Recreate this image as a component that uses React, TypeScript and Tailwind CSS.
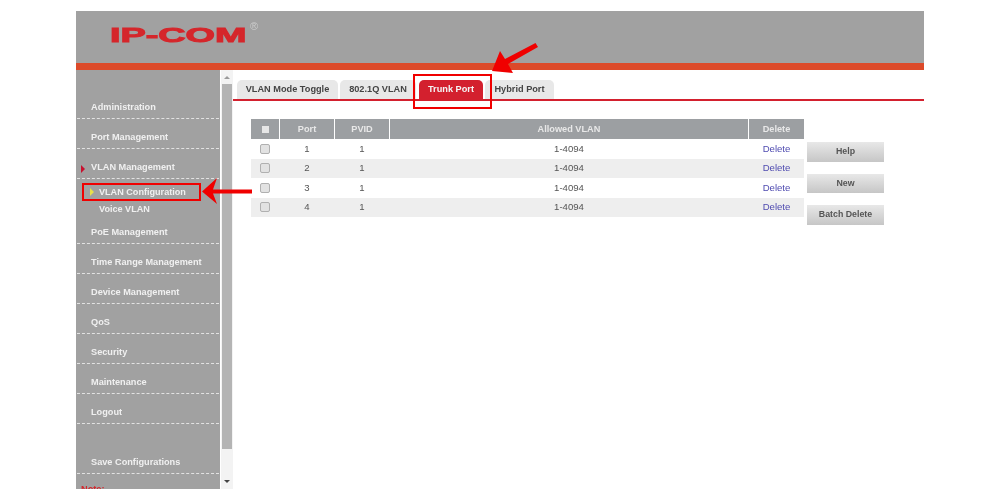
const font = "font-['Liberation_Sans',Arial,sans-serif]";

const menu = [
  { label: 'Administration' },
  { label: 'Port Management' },
  { label: 'VLAN Management', active: true },
];
const menu2 = [
  'PoE Management',
  'Time Range Management',
  'Device Management',
  'QoS',
  'Security',
  'Maintenance',
  'Logout',
];
const rows = [1, 2, 3, 4];

const MenuItem = ({ label, active }: { label: string; active?: boolean }) => (
  <div className="relative mx-[1px] box-border flex h-[30px] items-end border-b border-dashed border-[#e2e2e2] pb-[4px] pl-[14px] text-[9.2px] leading-[13px] font-bold text-[#f0f0f0]">
    {active && (
      <span className="absolute left-[4px] bottom-[5px] h-0 w-0 border-y-[4px] border-l-[4px] border-y-transparent border-l-[#c8102e]" />
    )}
    {label}
  </div>
);

const Tab = ({ label, w, active }: { label: string; w: string; active?: boolean }) => (
  <div
    className={`${w} flex h-[19px] items-center justify-center rounded-t-[5px] pt-[1px] text-[9.2px] font-bold ${
      active ? 'bg-[#d3202e] text-[#f4f4f4]' : 'bg-[#e8e8e8] text-[#444444]'
    }`}
  >
    {label}
  </div>
);

const Btn = ({ label }: { label: string }) => (
  <div className="flex h-[19.5px] w-[77px] items-center justify-center bg-gradient-to-b from-[#e8e8e8] to-[#c6c6c6] text-[8.8px] font-bold text-[#555555]">
    {label}
  </div>
);

const App = () => {
  return (
    <div className={`relative h-[500px] w-[1000px] overflow-hidden bg-white ${font}`}>
      <div className="ml-[76px] pt-[11px] blur-[0.4px] will-change-transform">
        <div className="flex h-[478px] w-[848px] flex-col overflow-hidden">
          <div className="flex h-[52px] items-start bg-[#a1a1a1] pl-[34px] pt-[11px]">
            <span className="w-[78px] origin-left scale-x-[1.8] whitespace-nowrap text-[21px] leading-[26px] font-bold text-[#d5262b] [-webkit-text-stroke:1px_#d5262b]">
              IP-COM
            </span>
            <span className="ml-[62px] -mt-[3px] text-[11px] leading-[14px] text-[#cccccc]">®</span>
          </div>
          <div className="h-[7px] bg-[#dc4a2a]" />
          <div className="flex min-h-0 flex-1">
            <div className="w-[144px] shrink-0 overflow-hidden bg-[#a1a1a1] pt-[19px]">
              {menu.map((m) => (
                <MenuItem key={m.label} label={m.label} active={m.active} />
              ))}
              <div className="h-[35px] pl-[23px] pt-[6px] text-[9.1px] font-bold text-[#f0f0f0]">
                <div className="relative h-[18px] leading-[14px]">
                  <span className="absolute -left-[9px] top-[3px] h-0 w-0 border-y-[4px] border-l-[4px] border-y-transparent border-l-[#e8e04a]" />
                  VLAN Configuration
                </div>
                <div className="leading-[13px]">Voice VLAN</div>
              </div>
              {menu2.map((m) => (
                <MenuItem key={m} label={m} />
              ))}
              <div className="h-[20px]" />
              <MenuItem label="Save Configurations" />
              <div className="pl-[5px] pt-[9px] text-[9.2px] leading-[13px] font-bold text-[#d5262b]">Note:</div>
            </div>
            <div className="ml-[1px] flex w-[12px] shrink-0 flex-col items-center bg-[#f3f3f3]">
              <div className="flex h-[14px] items-center justify-center">
                <span className="h-0 w-0 border-x-[3px] border-b-[3px] border-x-transparent border-b-[#9a9a9a]" />
              </div>
              <div className="h-[365px] w-[10px] bg-[#b4b4b4]" />
              <div className="flex-1" />
              <div className="flex h-[14px] items-center justify-center pb-[1px]">
                <span className="h-0 w-0 border-x-[3px] border-t-[3px] border-x-transparent border-t-[#444444]" />
              </div>
            </div>
            <div className="min-w-0 flex-1 bg-white">
              <div className="flex gap-[2px] border-b-2 border-[#d3202e] pl-[4px] pt-[10px]">
                <Tab label="VLAN Mode Toggle" w="w-[101px]" />
                <Tab label="802.1Q VLAN" w="w-[76px]" />
                <Tab label="Trunk Port" w="w-[64px] ml-[1px]" active />
                <Tab label="Hybrid Port" w="w-[69px]" />
              </div>
              <div className="flex items-start gap-[3px] pl-[18px] pt-[18px]">
                <div className="w-[553px] text-[9.6px]">
                  <div className="flex h-[20px] gap-[1px] bg-white text-[9.2px] font-bold text-[#e8e8e8]">
                    <div className="flex w-[28px] items-center justify-center bg-[#9c9fa2]">
                      <span className="h-[7px] w-[7px] bg-[#e6e6e6]" />
                    </div>
                    <div className="flex w-[54px] items-center justify-center bg-[#9c9fa2] pt-[1px]">Port</div>
                    <div className="flex w-[54px] items-center justify-center bg-[#9c9fa2] pt-[1px]">PVID</div>
                    <div className="flex flex-1 items-center justify-center bg-[#9c9fa2] pt-[1px]">Allowed VLAN</div>
                    <div className="flex w-[55px] items-center justify-center bg-[#9c9fa2] pt-[1px]">Delete</div>
                  </div>
                  {rows.map((r) => (
                    <div
                      key={r}
                      className={`flex h-[19.5px] gap-[1px] text-[#555555] ${r % 2 === 0 ? 'bg-[#eeeeee]' : 'bg-white'}`}
                    >
                      <div className="flex w-[28px] items-center justify-center">
                        <span className="h-[10px] w-[10px] rounded-[2px] border border-[#b0b0b0] bg-[#e2e2e2]" />
                      </div>
                      <div className="flex w-[54px] items-center justify-center">{r}</div>
                      <div className="flex w-[54px] items-center justify-center">1</div>
                      <div className="flex flex-1 items-center justify-center">1-4094</div>
                      <div className="flex w-[55px] items-center justify-center text-[#4f4bb0]">Delete</div>
                    </div>
                  ))}
                </div>
                <div className="mt-[23px] flex flex-col gap-[12px]">
                  <Btn label="Help" />
                  <Btn label="New" />
                  <Btn label="Batch Delete" />
                </div>
              </div>
            </div>
          </div>
        </div>
      </div>

      {/* annotations */}
      <div className="absolute left-[413px] top-[74px] h-[35px] w-[79px] border-2 border-[#f00000]" />
      <div className="absolute left-[82px] top-[183px] h-[18px] w-[119px] border-2 border-[#f00000]" />
      <svg className="absolute left-[200px] top-[40px]" width="345" height="170" viewBox="200 40 345 170">
        <path d="M202 191.5L217 178L213 189.5H252V193.5H213L217 204Z" fill="#f00000" />
        <path d="M492 71L500 51L505 59L535.5 43L538 47L508 64L513 73Z" fill="#f00000" />
      </svg>
    </div>
  );
};

export default App;
